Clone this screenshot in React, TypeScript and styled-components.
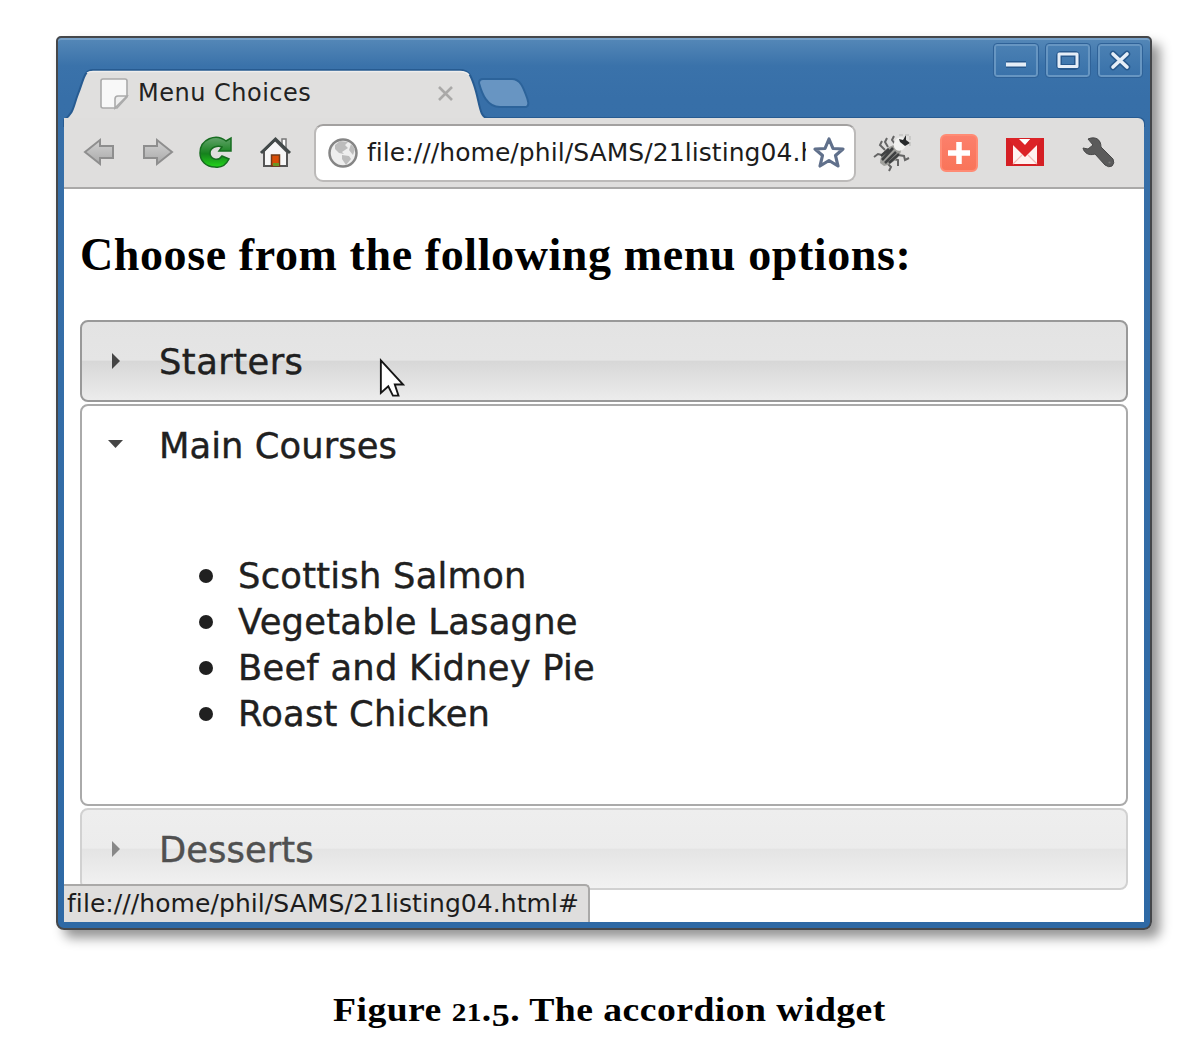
import React from "react";
import styled, { createGlobalStyle } from "styled-components";

const sans = `"DejaVu Sans", Verdana, sans-serif`;
const serif = `"Liberation Serif", "Times New Roman", serif`;

const GlobalStyle = createGlobalStyle`
  * { box-sizing: border-box; }
  body { margin: 0; background: #fff; }
`;

const Page = styled.main`
  width: 1190px;
  height: 1042px;
  padding: 36px 0 0 56px;
  overflow: hidden;
  background: #fff;
`;

const Window = styled.section`
  position: relative;
  display: flex;
  flex-direction: column;
  width: 1096px;
  height: 894px;
  padding: 0 6px 6px;
  border: 2px solid #45474a;
  border-radius: 5px 5px 8px 8px;
  background: linear-gradient(#5588b8 0, #3a72aa 28px, #376fa8 60px, #2e69a5 100%);
  box-shadow: 8px 8px 12px rgba(0, 0, 0, 0.42), inset 0 2px 0 #76a0c8;
`;

const TitleBar = styled.header`
  position: relative;
  display: flex;
  justify-content: space-between;
  height: 80px;
`;

const TabShape = styled.svg`
  position: absolute;
  left: 0;
  top: 30px;
  overflow: visible;
`;

const Tab = styled.div`
  position: relative;
  display: flex;
  align-items: center;
  width: 359px;
  height: 34px;
  margin: 38px 0 0 35px;
`;

const TabTitle = styled.span`
  flex: 1;
  margin-left: 9px;
  font: 24px/34px ${sans};
  letter-spacing: 0.5px;
  color: #222;
`;

const Controls = styled.div`
  display: flex;
  gap: 8px;
  margin: 6px 2px 0 0;
`;

const ControlButton = styled.button`
  display: grid;
  place-items: center;
  width: 44px;
  height: 33px;
  padding: 0;
  border: 2px solid #6796c2;
  border-radius: 3px;
  outline: 1px solid #2f6298;
  background: linear-gradient(#4a80b3, #3a72aa);
`;

const Toolbar = styled.nav`
  position: relative;
  display: flex;
  align-items: center;
  height: 71px;
  padding: 0 28px 0 18px;
  border-bottom: 2px solid #aaa9a8;
  border-radius: 0 6px 0 0;
  background: #dfdedd;
`;

const Icon = styled.svg<{ $gap?: number }>`
  flex: none;
  margin-left: ${(p) => p.$gap ?? 0}px;
  overflow: visible;
`;

const AddressBar = styled.div`
  display: flex;
  align-items: center;
  width: 542px;
  height: 58px;
  margin-left: 21px;
  padding: 0 8px 0 12px;
  border: 2px solid #bcbab9;
  border-top-color: #a3a1a0;
  border-radius: 9px;
  background: #fff;
`;

const Url = styled.span`
  width: 439px;
  margin-left: 7px;
  overflow: hidden;
  white-space: nowrap;
  font: 25px/34px ${sans};
  letter-spacing: 0.06px;
  color: #1c1c1c;
`;

const Content = styled.article`
  flex: 1;
  min-height: 0;
  padding: 38px 16px 0;
  background: #fff;
`;

const Heading = styled.h1`
  height: 93px;
  margin: 0;
  white-space: nowrap;
  font: bold 46px/56px ${serif};
  letter-spacing: 0.6px;
  color: #000;
`;

const Accordion = styled.div`
  display: flex;
  flex-direction: column;
  gap: 2px;
`;

const tones = {
  hover: { border: "#999", text: "#202020", fill: "linear-gradient(#e3e3e3 0, #e5e5e5 49%, #d7d7d7 50%, #ececec 100%)" },
  open: { border: "#aaa", text: "#202020", fill: "#fff" },
  idle: { border: "#d1d1d1", text: "#505050", fill: "linear-gradient(#eee 0, #ececec 49%, #e4e4e4 50%, #f2f2f2 100%)" },
};
type Tone = keyof typeof tones;

const Section = styled.section<{ $tone: Tone; $height: number }>`
  height: ${(p) => p.$height}px;
  border: 2px solid ${(p) => tones[p.$tone].border};
  border-radius: 8px;
  color: ${(p) => tones[p.$tone].text};
  background: ${(p) => tones[p.$tone].fill};
  -webkit-text-stroke: 0.4px ${(p) => tones[p.$tone].text};
`;

const SectionTitle = styled.h3`
  display: flex;
  align-items: center;
  height: 78px;
  margin: 0;
  padding-left: 24px;
  font: 35.3px/46px ${sans};
`;

const SectionLabel = styled.span<{ $spacing?: number }>`
  margin-left: 33px;
  padding-top: 2px;
  letter-spacing: ${(p) => p.$spacing ?? 0.07}px;
`;

const MenuList = styled.ul`
  margin: 0;
  padding: 69px 0 0 117px;
  list-style: none;
  font: 35.3px/46px ${sans};
  letter-spacing: 0.24px;
`;

const MenuItem = styled.li`
  display: flex;
  align-items: center;
  height: 46px;
  gap: 25px;
  &::before {
    content: "";
    width: 14px;
    height: 14px;
    border-radius: 50%;
    background: #202020;
  }
`;

const Status = styled.div`
  position: absolute;
  left: 6px;
  bottom: 6px;
  width: 526px;
  height: 38px;
  padding-left: 3px;
  border: solid #aaa9a8;
  border-width: 2px 2px 0 0;
  border-radius: 0 5px 0 0;
  background: #dfdedd;
  font: 25px/35px ${sans};
  letter-spacing: 0.07px;
  color: #1c1c1c;
`;

const Pointer = styled.svg`
  position: absolute;
  left: 321px;
  top: 320px;
`;

const Caption = styled.p`
  width: max-content;
  margin: 58px 0 0 277px;
  white-space: nowrap;
  font: bold 33.5px/44px ${serif};
  letter-spacing: 0.4px;
  transform: scaleX(1.125);
  transform-origin: left;
  color: #000;
`;

const Numeral = styled.span<{ $size: number; $drop?: number }>`
  position: relative;
  top: ${(p) => p.$drop ?? 0}px;
  font-size: ${(p) => p.$size}px;
  line-height: 1;
`;

const Arrow = ({ color, open }: { color: string; open?: boolean }) => (
  <Icon width="20" height="20" viewBox="0 0 20 20">
    <path d={open ? "M2 5H17L9.5 13Z" : "M6 2V18L14 10Z"} fill={color} />
  </Icon>
);

const dishes = ["Scottish Salmon", "Vegetable Lasagne", "Beef and Kidney Pie", "Roast Chicken"];

export default function App() {
  return (
    <Page>
      <GlobalStyle />
      <Window>
        <TitleBar>
          <TabShape width="1080" height="52" viewBox="0 0 1080 52">
            <path d="M0 52C10 45 9 39 14 26C20 11 20 2 29 2H396C405 2 407 8 410 17C416 34 415 50 424 50H1074Q1080 50 1080 56V58H0Z" fill="#e0dfde" stroke="#275b91" strokeWidth="2" />
            <path d="M23 5Q25 3.5 29 3.5H396Q402 3.5 405 7" fill="none" stroke="#efeeed" strokeWidth="1.4" />
            <path d="M415 15Q415 11 419 11H448C456 11 459 19 462 27C464 32 466 38 462 39H436C423 39 418 26 415 15Z" fill="#6895c2" stroke="#2c639a" strokeWidth="2" />
          </TabShape>
          <Tab>
            <Icon width="30" height="34" viewBox="0 0 30 34">
              <path d="M4 3H26Q28 3 28 5V21L18 32H4Q2 32 2 30V5Q2 3 4 3Z" fill="#f8f8f8" stroke="#aaa" strokeWidth="1.6" />
              <path d="M28 20H19Q16 20 16 23V32L28 20Z" fill="#eee" stroke="#aaa" strokeWidth="1.6" />
            </Icon>
            <TabTitle>Menu Choices</TabTitle>
            <Icon width="20" height="20" viewBox="0 0 20 20"><path d="M1 4L14 17M14 4L1 17" stroke="#aaa9a8" strokeWidth="2.6" /></Icon>
          </Tab>
          <Controls>
            <ControlButton aria-label="Minimize"><Icon width="24" height="24"><path d="M2 15.5H22" stroke="#28598d" strokeWidth="7" /><path d="M2 15.5H22" stroke="#e6eef7" strokeWidth="4" /></Icon></ControlButton>
            <ControlButton aria-label="Maximize"><Icon width="24" height="24"><rect x="3" y="5" width="18" height="13" rx="2" fill="none" stroke="#28598d" strokeWidth="6" /><path d="M3 5H21V17.500H3Z" fill="none" stroke="#e6eef7" strokeWidth="3" strokeLinejoin="round" /></Icon></ControlButton>
            <ControlButton aria-label="Close"><Icon width="24" height="24"><path d="M5 5L19 18M19 5L5 18" stroke="#28598d" strokeWidth="6.5" strokeLinecap="round" /><path d="M5 5L19 18M19 5L5 18" stroke="#e6eef7" strokeWidth="3.6" strokeLinecap="round" /></Icon></ControlButton>
          </Controls>
        </TitleBar>
        <Toolbar>
          <Icon width="34" height="34" viewBox="0 0 34 34">
            <defs><linearGradient id="nav" x2="0" y2="1"><stop stopColor="#d2d2d2" /><stop offset="1" stopColor="#a9a9a9" /></linearGradient></defs>
            <path d="M3 16L18 4V10H31V22H18V28Z" fill="url(#nav)" stroke="#8e8e8e" strokeWidth="2" />
          </Icon>
          <Icon $gap={25} width="34" height="34" viewBox="0 0 34 34"><path d="M31 16L16 4V10H3V22H16V28Z" fill="url(#nav)" stroke="#8e8e8e" strokeWidth="2" /></Icon>
          <Icon $gap={24} width="34" height="34" viewBox="0 0 34 34">
            <defs><linearGradient id="reload" x2="0" y2="1"><stop stopColor="#62a46b" /><stop offset=".55" stopColor="#15811c" /><stop offset="1" stopColor="#24d51b" /></linearGradient></defs>
            <path d="M27 5L32 2V15H20L23 11C19 9 11 11 11 17C11 23 19 26 23 20L30 23C27 29 22 32 16 31C7 31 1 25 1 17C1 3 17-3 27 5Z" fill="url(#reload)" stroke="#176d20" strokeWidth="1.5" />
          </Icon>
          <Icon $gap={26} width="34" height="34" viewBox="0 0 34 34">
            <path d="M23 3H27V12H23Z" fill="#fff" stroke="#777" strokeWidth="1.5" />
            <path d="M6 14L16 4L28 16V30H5V15Z" fill="#f7f7f7" stroke="#555" strokeWidth="2" />
            <path d="M2 17L16.500 3L31 17" fill="none" stroke="#424949" strokeWidth="3" />
            <path d="M12.500 19H20.500V30H12.500Z" fill="#d94d06" stroke="#703a17" strokeWidth="1.5" /><path d="M14 27H20V30H14Z" fill="#6b9623" />
          </Icon>
          <AddressBar>
            <Icon width="32" height="32" viewBox="0 0 32 32">
              <circle cx="15" cy="16" r="13.500" fill="#eee" stroke="#858585" strokeWidth="2.5" />
              <path d="M7 8L12 4L20 5L17 8L20 11L14 15L16 17L11 16L7 12ZM14 18L21 19L23 22L18 28L14 22ZM23 7L27 12L25 18L21 13Z" fill="#bcbcbc" />
            </Icon>
            <Url>file:///home/phil/SAMS/21listing04.html</Url>
            <Icon $gap={8} width="32" height="34" viewBox="0 0 32 34"><path d="M15 3L19 12.500L29 13L21.500 19.500L24 30L15 24.500L6 30L8.500 19.500L1 13L11 12.500Z" fill="#fff" stroke="#60708b" strokeWidth="3.2" strokeLinejoin="round" /></Icon>
          </AddressBar>
          <Icon $gap={17} width="40" height="40" viewBox="0 0 40 40">
            <g fill="none" stroke="#656565" strokeWidth="2"><path d="M12 17L7 12L9 8M15 14L12 9L14 5M22 11L19 7L21 3M9 22L5 21L1 24M14 30L18 34L16 38M20 26L25 27V33M25 22L31 23L32 27L36 25" /></g>
            <path d="M7 30C7 20 15 12 23 12L28 17C28 24 18 32 11 33Z" fill="#a0a09c" /><path d="M9 27L20 15M12 30L23 19M16 30L26 21M8 23L16 16" stroke="#3f4142" strokeWidth="2.600" />
            <ellipse cx="27" cy="11" rx="6" ry="7" fill="#f1f1ef" transform="rotate(35 27 11)" /><path d="M26 6L30 7L33 2L33 7L37 10L32 13L27 9Z" fill="#282a2b" /><path d="M26 2H37V15" fill="none" stroke="#b5b5b3" strokeDasharray="4 2" />
          </Icon>
          <Icon $gap={26} width="40" height="40" viewBox="0 0 40 40">
            <defs><linearGradient id="plus" x2="0" y2="1"><stop stopColor="#fc806c" /><stop offset="1" stopColor="#f97459" /></linearGradient></defs>
            <rect x="2" y="2" width="36" height="36" rx="5" fill="url(#plus)" stroke="#ff8b74" strokeWidth="2" /><path d="M20 9V31M9 20H31" stroke="#fff" strokeWidth="5.5" />
          </Icon>
          <Icon $gap={26} width="40" height="32" viewBox="0 0 40 32">
            <rect x="1" y="1" width="38" height="28" fill="#d51f24" /><path d="M8 2H32V27H8Z" fill="#fff2f0" /><path d="M3 1H15L20 7L26 1H37L33 7L20 20L7 7Z" fill="#dc2327" /><path d="M14 2H25L20 8Z" fill="#fff" /><path d="M8 27L17 18M32 27L23 18" stroke="#f2bbb5" strokeWidth="1.2" />
          </Icon>
          <Icon $gap={36} width="34" height="34" viewBox="0 0 34 34"><path d="M2 12L7 13L12 9L7 3C14 0 20 3 20 11L32 23Q34 27 31 30Q28 32 24 29L14 18C8 20 3 17 2 12Z" fill="#5b5b5b" stroke="#484848" /><circle cx="28.500" cy="26.500" r="1.1" fill="#777" /></Icon>
        </Toolbar>
        <Content>
          <Heading>Choose from the following menu options:</Heading>
          <Accordion>
            <Section $tone="hover" $height={82}><SectionTitle><Arrow color="#454545" /><SectionLabel $spacing={0.45}>Starters</SectionLabel></SectionTitle></Section>
            <Section $tone="open" $height={402}>
              <SectionTitle><Arrow color="#454545" open /><SectionLabel>Main Courses</SectionLabel></SectionTitle>
              <MenuList>{dishes.map((dish) => <MenuItem key={dish}>{dish}</MenuItem>)}</MenuList>
            </Section>
            <Section $tone="idle" $height={82}><SectionTitle><Arrow color="#888" /><SectionLabel>Desserts</SectionLabel></SectionTitle></Section>
          </Accordion>
        </Content>
        <Status>file:///home/phil/SAMS/21listing04.html#</Status>
        <Pointer width="26" height="40" viewBox="0 0 28 42"><path d="M2 2V37L10 30L15 40H21L17 28H26Z" fill="#fff" stroke="#151515" strokeWidth="2" /></Pointer>
      </Window>
      <Caption>Figure <Numeral $size={26}>21</Numeral>.<Numeral $size={32} $drop={5}>5</Numeral>. The accordion widget</Caption>
    </Page>
  );
}
